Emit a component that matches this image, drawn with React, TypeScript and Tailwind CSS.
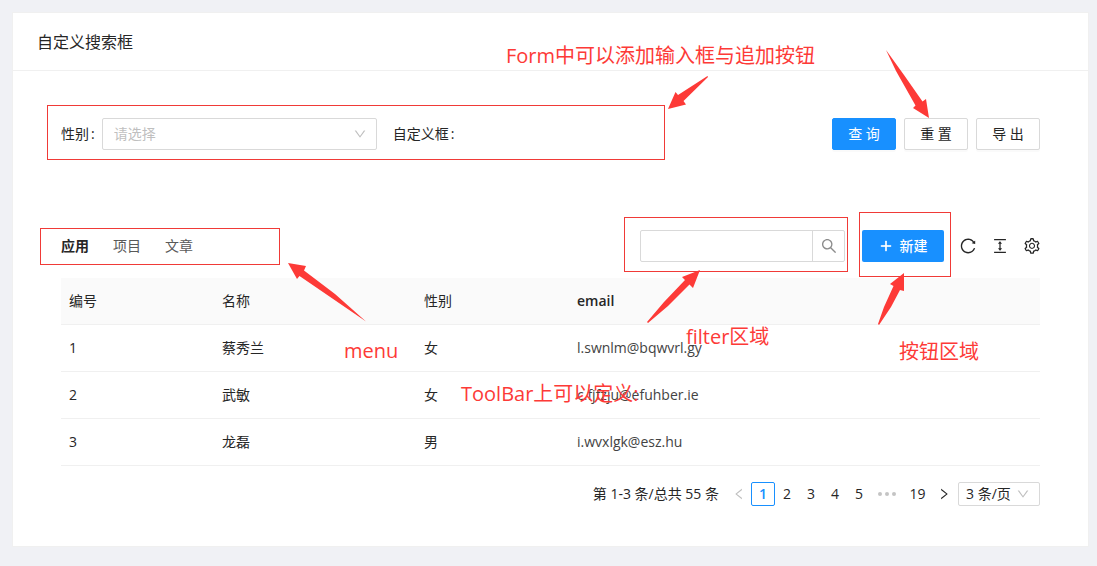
import {
  AiOutlineColumnHeight,
  AiOutlineDown,
  AiOutlineLeft,
  AiOutlinePlus,
  AiOutlineReload,
  AiOutlineRight,
  AiOutlineSearch,
  AiOutlineSetting,
} from "react-icons/ai";

const rows = [
  { id: 1, name: "蔡秀兰", gender: "女", email: "l.swnlm@bqwvrl.gy" },
  { id: 2, name: "武敏", gender: "女", email: "c.fjfzju@efuhber.ie" },
  { id: 3, name: "龙磊", gender: "男", email: "i.wvxlgk@esz.hu" },
];

const buttonBase =
  "h-8 w-16 rounded-xs border text-sm whitespace-pre shadow-[0_2px_0_rgba(0,0,0,0.02)]";

const iconButton = "flex w-4 items-center justify-center";

function SearchForm() {
  return (
    <form className="grid grid-cols-3 gap-4" onSubmit={(e) => e.preventDefault()}>
      <div className="flex items-center gap-[7px]">
        <label htmlFor="gender" className="shrink-0">
          性别<span className="ml-0.5">:</span>
        </label>
        <div className="relative min-w-0 flex-1">
          <select
            id="gender"
            defaultValue=""
            className="block h-8 w-full appearance-none rounded-xs border border-[#d9d9d9] bg-white px-[11px] text-sm text-[#bfbfbf]"
          >
            <option value="">请选择</option>
            <option value="f">女</option>
            <option value="m">男</option>
          </select>
          <AiOutlineDown className="pointer-events-none absolute top-[9px] right-2.5 size-3.5 text-[#bfbfbf]" />
        </div>
      </div>
      <div className="flex items-center">
        自定义框<span className="ml-0.5">:</span>
      </div>
      <div className="flex items-center justify-end gap-2">
        <button type="submit" className={`${buttonBase} border-[#1890ff] bg-[#1890ff] text-white`}>
          查 询
        </button>
        <button type="reset" className={`${buttonBase} border-[#d9d9d9] bg-white`}>
          重 置
        </button>
        <button type="button" className={`${buttonBase} border-[#d9d9d9] bg-white`}>
          导 出
        </button>
      </div>
    </form>
  );
}

function Toolbar() {
  return (
    <div className="flex items-center justify-between">
      <nav className="flex gap-6 text-[#595959]">
        <a href="#app" className="font-bold text-[#262626]">
          应用
        </a>
        <a href="#project">项目</a>
        <a href="#article">文章</a>
      </nav>
      <div className="flex items-center gap-[17px]">
        <div className="flex h-8 w-[205px] rounded-xs border border-[#d9d9d9]">
          <input aria-label="搜索" className="min-w-0 flex-1 px-3 outline-none" />
          <button
            type="button"
            aria-label="搜索"
            className="flex w-8 items-center justify-center border-l border-[#d9d9d9] text-[#8c8c8c]"
          >
            <AiOutlineSearch className="size-[18px]" />
          </button>
        </div>
        <div className="flex items-center gap-4">
          <button
            type="button"
            className="flex h-8 w-[82px] items-center justify-center gap-[7px] rounded-xs bg-[#1890ff] font-medium text-white"
          >
            <AiOutlinePlus className="size-3.5 stroke-white stroke-[50]" />
            新建
          </button>
          <button type="button" aria-label="刷新" className={iconButton}>
            <AiOutlineReload className="size-[18px] shrink-0" />
          </button>
          <button type="button" aria-label="密度" className={iconButton}>
            <AiOutlineColumnHeight className="size-[18px] shrink-0" />
          </button>
          <button type="button" aria-label="列设置" className={iconButton}>
            <AiOutlineSetting className="size-[18px] shrink-0" />
          </button>
        </div>
      </div>
    </div>
  );
}

function DataTable() {
  return (
    <table className="mt-4 w-full table-fixed text-left">
      <thead>
        <tr className="h-[46px] border-b border-[#f0f0f0] bg-[#fafafa]">
          <th className="w-[153px] px-2 font-normal">编号</th>
          <th className="w-[202px] px-2 font-normal">名称</th>
          <th className="w-[153px] px-2 font-normal">性别</th>
          <th className="px-2 font-semibold">email</th>
        </tr>
      </thead>
      <tbody>
        {rows.map((row) => (
          <tr key={row.id} className="h-[47px] border-b border-[#f0f0f0]">
            <td className="px-2">{row.id}</td>
            <td className="px-2">{row.name}</td>
            <td className="px-2">{row.gender}</td>
            <td className="px-2 text-[#434343]">{row.email}</td>
          </tr>
        ))}
      </tbody>
    </table>
  );
}

function Pagination() {
  return (
    <div className="mt-4 flex h-6 items-center justify-end">
      <span className="mr-2">第 1-3 条/总共 55 条</span>
      <button type="button" aria-label="上一页" disabled className="flex size-6 items-center justify-center text-[#bfbfbf]">
        <AiOutlineLeft className="size-3.5" />
      </button>
      <button type="button" className="size-6 rounded-xs border border-[#1890ff] font-semibold text-[#1890ff]">
        1
      </button>
      {[2, 3, 4, 5].map((n) => (
        <button key={n} type="button" className="size-6">
          {n}
        </button>
      ))}
      <span className="flex w-8 justify-center gap-[3px]">
        <i className="size-1 rounded-full bg-[#c4c4c4]" />
        <i className="size-1 rounded-full bg-[#c4c4c4]" />
        <i className="size-1 rounded-full bg-[#c4c4c4]" />
      </span>
      <button type="button" className="h-6 w-[29px]">
        19
      </button>
      <button type="button" aria-label="下一页" className="mr-0.5 flex size-6 items-center justify-center">
        <AiOutlineRight className="size-3.5" />
      </button>
      <div className="relative">
        <select
          aria-label="每页条数"
          className="block h-6 w-[82px] appearance-none rounded-xs border border-[#d9d9d9] bg-white px-[7px] text-sm leading-5"
        >
          <option>3 条/页</option>
          <option>10 条/页</option>
        </select>
        <AiOutlineDown className="pointer-events-none absolute top-[5px] right-2.5 size-3.5 text-[#bfbfbf]" />
      </div>
    </div>
  );
}

function Annotations() {
  return (
    <div className="pointer-events-none absolute top-0 left-0 text-xl leading-7 whitespace-nowrap text-[#fd3a37]">
      <div className="absolute top-[105px] left-[47px] h-[55px] w-[618px] border border-[#f03a37]" />
      <div className="absolute top-[228px] left-[40px] h-[37px] w-[240px] border border-[#f03a37]" />
      <div className="absolute top-[217px] left-[624px] h-[55px] w-[224px] border border-[#f03a37]" />
      <div className="absolute top-[212px] left-[859px] h-[65px] w-[92px] border border-[#f03a37]" />
      <span className="absolute top-[42px] left-[506px]">Form中可以添加输入框与追加按钮</span>
      <span className="absolute top-[337px] left-[344px]">menu</span>
      <span className="absolute top-[323px] left-[686px]">filter区域</span>
      <span className="absolute top-[338px] left-[899px]">按钮区域</span>
      <span className="absolute top-[380px] left-[461px]">ToolBar上可以定义:</span>
      <svg width="1097" height="566" viewBox="0 0 1097 566" fill="#fd3a37" className="absolute top-0 left-0 max-w-none">
        <path d="M707.500 76L678 95L675.500 92L668 109L686 104.500L683.500 101L708 77Z" />
        <path d="M886 50L896 71L915.500 105.500L913 108L929 118L926 99L922.500 101.500L904 75Z" />
        <path d="M288 263L297 279L299.500 276L366 321.500L335 294L304 270.500L306 266Z" />
        <path d="M700 270L682 277L685 280L664 302L647 322L648 323L668 306L689.500 284.500L693 288Z" />
        <path d="M904 273L890 284L893.500 286L884 307L878 324L879 325L891 307L900 290L904 291Z" />
      </svg>
    </div>
  );
}

export default function App() {
  return (
    <div className="relative min-h-screen bg-[#f0f1f5] pt-3 pr-2 pb-5 pl-3 font-['Open_Sans','Noto_Sans_CJK_SC',sans-serif] text-sm leading-[22px] text-[#262626]">
      <main className="border border-[#f0f0f0] bg-white">
        <h1 className="border-b border-[#f0f0f0] px-6 pt-[17px] pb-[15px] text-base leading-[25px]">自定义搜索框</h1>
        <div className="px-12 pt-[47px] pb-10">
          <SearchForm />
          <div className="mt-20">
            <Toolbar />
            <DataTable />
            <Pagination />
          </div>
        </div>
      </main>
      <Annotations />
    </div>
  );
}
